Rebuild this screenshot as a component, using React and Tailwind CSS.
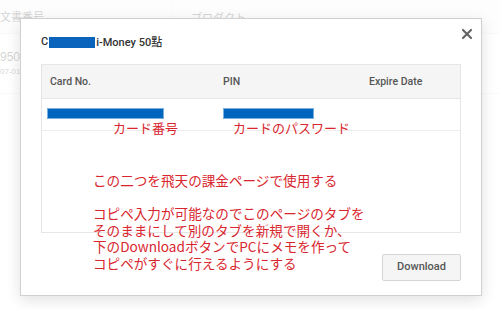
import { X } from "lucide-react";

const sans = { fontFamily: '"Liberation Sans", Arial, "Noto Sans CJK JP", sans-serif' };
const roboto = { fontFamily: 'Roboto, "Liberation Sans", "Noto Sans CJK JP", sans-serif' };
const jp = { fontFamily: '"Noto Sans CJK JP", "Noto Sans", sans-serif' };

function BackgroundTable() {
  return (
    <div className="text-[#555]">
      {/* header row */}
      <div className="flex h-[34px] items-center border-b border-[#e6e6e6] bg-[#f5f5f5]">
        <div className="w-[172px] text-[11px]" style={jp}>
          文書番号
        </div>
        <div className="h-full border-l border-[#e6e6e6] pl-[18px] text-[11px] leading-[34px]" style={jp}>
          プロダクト
        </div>
      </div>
      {/* body row */}
      <div className="flex h-[60px] flex-col justify-center border-b border-[#e6e6e6]">
        <span className="text-[12px] leading-[16px]">950</span>
        <span className="text-[8px] leading-[14px]">07-01</span>
      </div>
    </div>
  );
}

export default function App() {
  return (
    <div className="relative h-[309px] w-[500px] overflow-hidden bg-white" style={sans}>
      <BackgroundTable />

      {/* overlay */}
      <div className="absolute inset-0 bg-white/75" />

      {/* modal */}
      <div className="absolute left-[20px] top-[18px] flex h-[278px] w-[462px] flex-col border border-[#d0d0d0] bg-white px-[20px] pt-[16px] shadow-[0_4px_14px_rgba(0,0,0,0.12)]">
        <button className="absolute right-[6px] top-[7px] text-[#666]">
          <X className="h-[16px] w-[16px]" strokeWidth={3.2} />
        </button>

        {/* title */}
        <div className="flex h-[14px] items-center text-[11px] font-medium leading-[14px] text-[#333]" style={roboto}>
          <span>C</span>
          <span className="mx-[1px] h-[11px] w-[46px] bg-[#0a64bb]" />
          <span>
            i-Money 50<span style={jp}>點</span>
          </span>
        </div>

        {/* table */}
        <div className="mt-[15px] h-[169px] border border-[#e6e6e6]">
          <div className="flex h-[34px] items-center border-b border-[#e6e6e6] bg-[#f5f5f5] text-[10.5px] font-medium text-[#555]" style={roboto}>
            <div className="w-[181px] pl-[8px]">Card No.</div>
            <div className="w-[145px]">PIN</div>
            <div className="flex-1 pl-[1px]">Expire Date</div>
          </div>
          <div className="flex h-[32px] items-start border-b border-[#eeeeee] pt-[9px]">
            <div className="w-[181px] pl-[5px]">
              <div className="h-[11px] w-[117px] border border-[#7aaee0] bg-[#0065bd]" />
            </div>
            <div className="w-[145px]">
              <div className="h-[11px] w-[91px] border border-[#7aaee0] bg-[#0065bd]" />
            </div>
            <div className="flex-1" />
          </div>
        </div>

        {/* footer */}
        <div className="mt-[21px] flex justify-end">
          <button className="h-[27px] w-[79px] rounded-[2px] border border-[#d5d5d5] bg-[#f5f5f5] text-[11px] font-medium text-[#555]" style={roboto}>
            Download
          </button>
        </div>
      </div>

      {/* red annotations */}
      <span className="absolute left-[113px] top-[120px] text-[13px] leading-[16px] text-[#d9262e]" style={jp}>
        カード番号
      </span>
      <span className="absolute left-[233px] top-[120px] text-[13px] leading-[16px] text-[#d9262e]" style={jp}>
        カードのパスワード
      </span>
      <div className="absolute left-[93px] top-[172px] text-[13.6px] leading-[16.5px] text-[#d9262e]" style={jp}>
        <p>この二つを飛天の課金ページで使用する</p>
        <p className="mt-[16.5px]">コピペ入力が可能なのでこのページのタブを</p>
        <p>そのままにして別のタブを新規で開くか、</p>
        <p>下のDownloadボタンでPCにメモを作って</p>
        <p>コピペがすぐに行えるようにする</p>
      </div>
    </div>
  );
}
